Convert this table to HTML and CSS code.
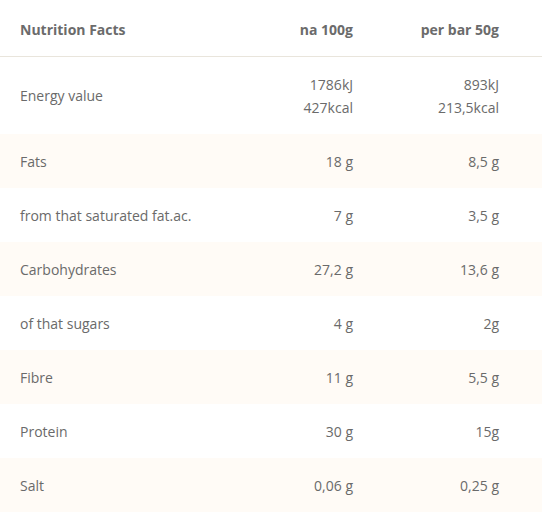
FILE: index.html
```html
<!DOCTYPE html>
<html>
<head>
<meta charset="utf-8">
<link rel="stylesheet" href="styles.css">
</head>
<body>
<div class="table">
  <div class="row head">
    <div class="c1">Nutrition Facts</div>
    <div class="c2">na 100g</div>
    <div class="c3">per bar 50g</div>
  </div>
  <div class="row energy">
    <div class="c1">Energy value</div>
    <div class="c2"><div>1786kJ</div><div>427kcal</div></div>
    <div class="c3"><div>893kJ</div><div>213,5kcal</div></div>
  </div>
  <div class="row alt">
    <div class="c1">Fats</div><div class="c2">18 g</div><div class="c3">8,5 g</div>
  </div>
  <div class="row">
    <div class="c1">from that saturated fat.ac.</div><div class="c2">7 g</div><div class="c3">3,5 g</div>
  </div>
  <div class="row alt">
    <div class="c1">Carbohydrates</div><div class="c2">27,2 g</div><div class="c3">13,6 g</div>
  </div>
  <div class="row">
    <div class="c1">of that sugars</div><div class="c2">4 g</div><div class="c3">2g</div>
  </div>
  <div class="row alt">
    <div class="c1">Fibre</div><div class="c2">11 g</div><div class="c3">5,5 g</div>
  </div>
  <div class="row">
    <div class="c1">Protein</div><div class="c2">30 g</div><div class="c3">15g</div>
  </div>
  <div class="row alt">
    <div class="c1">Salt</div><div class="c2">0,06 g</div><div class="c3">0,25 g</div>
  </div>
</div>
</body>
</html>
```
FILE: styles.css
```css
html, body { margin: 0; padding: 0; background: #fff; }
body {
  font-family: "Open Sans", "Noto Sans", sans-serif;
  font-size: 14px;
  color: #6a6a6a;
  width: 542px;
}
.table { width: 542px; }
.row {
  display: grid;
  grid-template-columns: 207px 146px 146px 43px;
  height: 54px;
  align-items: center;
}
.c1 { padding-left: 20px; }
.c2, .c3 { text-align: right; }
.head {
  height: 56px;
  box-sizing: border-box;
  height: 57px;
  padding-top: 3px;
  border-bottom: 1px solid #e9e5dc;
  font-weight: 700;
  color: #6b6b6b;
}
.energy { height: 77px; line-height: 23px; }
.alt { background: #fffbf6; }
```
